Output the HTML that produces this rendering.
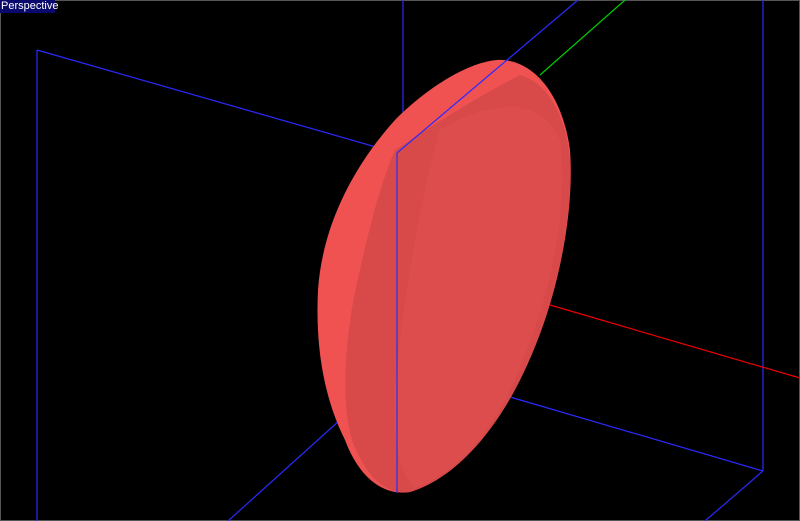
<!DOCTYPE html><html><head><style>body{margin:0;background:#000;width:800px;height:521px;overflow:hidden;position:relative}
.l{position:absolute;left:0;top:0;background:#0a0a6e;color:#fff;font:11px "Liberation Sans",sans-serif;padding:0 4px 1px 1px;line-height:12px;width:50px}
</style></head><body>
<svg width="800" height="521" style="position:absolute;left:0;top:0">
<rect x="0.5" y="0.5" width="799" height="520" fill="none" stroke="#555"/>
<g stroke="#2a2aff" stroke-width="1.2" fill="none">
<line x1="37" y1="50" x2="37" y2="521"/>
<line x1="37" y1="50" x2="397" y2="153"/>
<line x1="403" y1="0" x2="403" y2="160"/>
<line x1="763" y1="0" x2="763" y2="471"/>
<line x1="510" y1="397" x2="763" y2="471"/>
<line x1="763" y1="471" x2="705" y2="521"/>
<line x1="340" y1="420" x2="228" y2="521"/>
</g>
<line x1="540" y1="75" x2="625" y2="0" stroke="#0c0" stroke-width="1.2"/>
<line x1="550" y1="305" x2="800" y2="378" stroke="#e00" stroke-width="1.2"/>
<path d="M497 60 C530 58 562 90 570 150 C575 220 555 310 520 380 C490 440 450 480 410 492 C385 496 360 480 345 440 C325 400 315 350 318 290 C322 230 350 170 395 120 C430 85 470 62 497 60Z" fill="#f05252"/>
<path d="M395 150 C440 120 490 90 520 75 C555 85 568 130 570 160 C572 230 555 310 520 380 C490 440 450 480 410 492 C385 496 365 475 352 440 C340 400 345 330 360 270 C370 225 380 185 395 150Z" fill="#d84a4a"/>
<path d="M440 130 C490 100 540 95 560 140 C570 220 545 320 505 400 C475 455 440 480 415 488 C395 470 390 420 398 360 C405 290 420 200 440 130Z" fill="#df4d4d" opacity="0.8"/>
<g stroke="#2a2aff" stroke-width="1.2">
<line x1="397" y1="153" x2="397" y2="493"/>
<line x1="397" y1="153" x2="578" y2="0"/>
</g>
</svg>
<div class="l">Perspective</div>
</body></html>
